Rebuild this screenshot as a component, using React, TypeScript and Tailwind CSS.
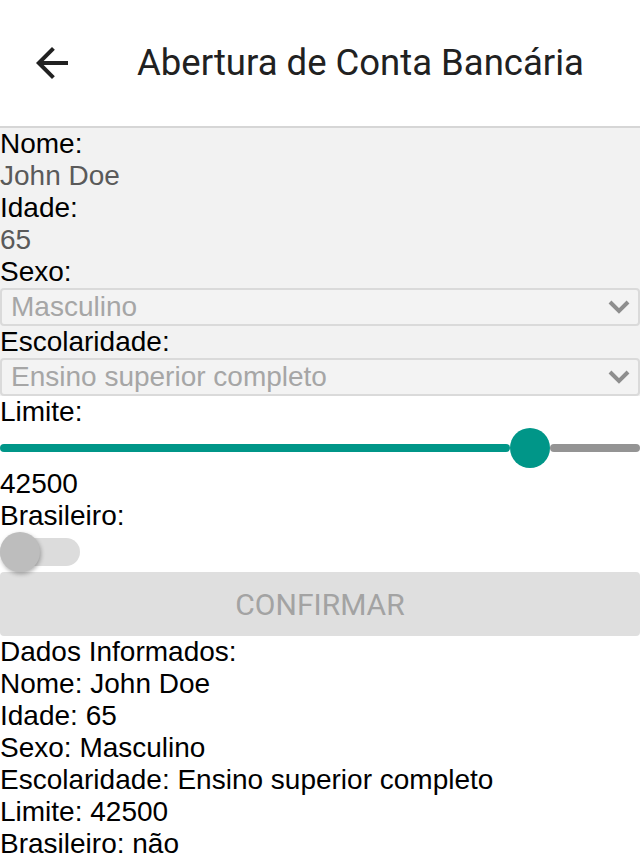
import React from "react";

const sans = "font-['Liberation_Sans',Arial,sans-serif]";

function ChevronDown() {
  return (
    <svg width="22" height="14" viewBox="0 0 22 14" className="shrink-0">
      <path d="M2 2l9 9 9-9" fill="none" stroke="#8e8e8e" strokeWidth="4" />
    </svg>
  );
}

function Select({ value }: { value: string }) {
  return (
    <div className="flex h-[38px] items-center justify-between rounded-[4px] border-2 border-[#dadada] bg-[#f3f3f3] pl-[9px] pr-[8px]">
      <span className="text-[28px] leading-[32px] text-[#a6a6a6]">{value}</span>
      <ChevronDown />
    </div>
  );
}

export default function App() {
  const dados = [
    "Dados Informados:",
    "Nome: John Doe",
    "Idade: 65",
    "Sexo: Masculino",
    "Escolaridade: Ensino superior completo",
    "Limite: 42500",
    "Brasileiro: não",
  ];

  return (
    <div className={`w-[640px] min-h-[860px] bg-white text-black ${sans}`}>
      <header className="flex h-[128px] items-center border-b-2 border-[#d6d6d6] bg-white">
        <svg width="48" height="48" viewBox="0 0 24 24" className="ml-[28px]">
          <path d="M20 11H7.83l5.59-5.59L12 4l-8 8 8 8 1.41-1.41L7.83 13H20v-2z" fill="#212121" />
        </svg>
        <h1 className="ml-[61px] font-['Roboto',sans-serif] text-[36.5px] font-normal text-[#212121]">
          Abertura de Conta Bancária
        </h1>
      </header>

      <section className="bg-[#f2f2f2]">
        <div className="text-[28px] leading-[32px]">Nome:</div>
        <div className="text-[28px] leading-[32px] text-[#5a5a5a]">John Doe</div>
        <div className="text-[28px] leading-[32px]">Idade:</div>
        <div className="text-[28px] leading-[32px] text-[#5a5a5a]">65</div>
        <div className="text-[28px] leading-[32px]">Sexo:</div>
        <Select value="Masculino" />
        <div className="text-[28px] leading-[32px]">Escolaridade:</div>
        <Select value="Ensino superior completo" />
      </section>

      <div className="text-[28px] leading-[32px]">Limite:</div>
      <div className="relative h-[40px]">
        <div className="absolute left-0 top-[16px] h-[8px] w-[510px] rounded-full bg-[#009688]" />
        <div className="absolute left-[550px] top-[16px] h-[8px] w-[90px] rounded-full bg-[#949494]" />
        <div className="absolute left-[510px] top-0 h-[40px] w-[40px] rounded-full bg-[#009688]" />
      </div>
      <div className="text-[28px] leading-[32px]">42500</div>
      <div className="text-[28px] leading-[32px]">Brasileiro:</div>
      <div className="relative h-[40px] w-[80px]">
        <div className="absolute left-0 top-[6px] h-[28px] w-[80px] rounded-full bg-[#dcdcdc]" />
        <div className="absolute left-0 top-0 h-[40px] w-[40px] rounded-full bg-[#bdbdbd] shadow-[1px_2px_4px_rgba(0,0,0,0.3)]" />
      </div>

      <button
        disabled
        className="flex h-[64px] w-full items-center justify-center rounded-[4px] bg-[#dfdfdf] font-['Roboto',sans-serif] text-[30px] text-[#a3a3a3]"
      >
        CONFIRMAR
      </button>

      <div>
        {dados.map((linha) => (
          <div key={linha} className="text-[28px] leading-[32px]">
            {linha}
          </div>
        ))}
      </div>
    </div>
  );
}
